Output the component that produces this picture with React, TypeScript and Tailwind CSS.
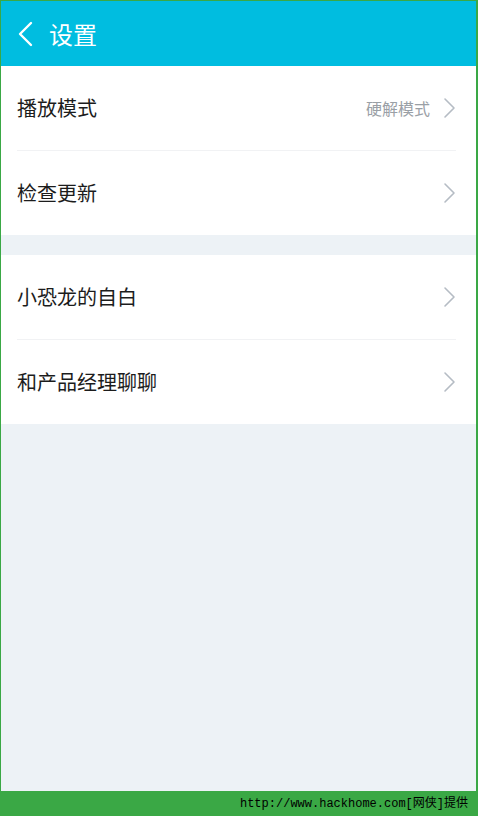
import React from "react";

const CJK = { fontFamily: '"Noto Sans CJK SC", "Noto Sans", sans-serif' };

function Chevron() {
  return (
    <svg width="14" height="22" viewBox="0 0 14 22" fill="none" stroke="#b5bcc4" strokeWidth="1.6" strokeLinecap="round" strokeLinejoin="round">
      <path d="M3 2l9 9-9 9" />
    </svg>
  );
}

function Row({ label, value, last }: { label: string; value?: string; last?: boolean }) {
  return (
    <div className="bg-white">
      <div className="flex h-[84px] items-center pl-[16px] pr-[20px]">
        <span className="text-[20px] text-[#1c1c1c]">{label}</span>
        <div className="ml-auto flex items-center gap-[12px]">
          {value && <span className="text-[16px] text-[#9aa0a6]">{value}</span>}
          <Chevron />
        </div>
      </div>
      {!last && <div className="ml-[16px] mr-[20px] h-px bg-[#f1f2f4]" />}
    </div>
  );
}

export default function App() {
  return (
    <div className="flex h-[816px] w-[478px] flex-col bg-[#3aa845]" style={CJK}>
      <div className="ml-px mr-[2px] mt-px flex flex-1 flex-col bg-[#edf2f6]">
        <div className="flex h-[65px] items-center gap-[14px] bg-[#00bde0] pl-[16px]">
          <svg width="18" height="28" viewBox="0 0 18 28" fill="none" stroke="white" strokeWidth="2.4" strokeLinecap="round" strokeLinejoin="round">
            <path d="M14 3L3 14l11 11" />
          </svg>
          <span className="text-[24px] text-white">设置</span>
        </div>
        <Row label="播放模式" value="硬解模式" />
        <Row label="检查更新" last />
        <div className="h-[20px]" />
        <Row label="小恐龙的自白" />
        <Row label="和产品经理聊聊" last />
      </div>
      <div className="flex h-[25px] items-center justify-end pr-[10px]">
        <span
          className="text-[12px] leading-none text-black"
          style={{ fontFamily: '"Liberation Mono", "Noto Sans CJK SC", monospace' }}
        >
          http://www.hackhome.com[网侠]提供
        </span>
      </div>
    </div>
  );
}
